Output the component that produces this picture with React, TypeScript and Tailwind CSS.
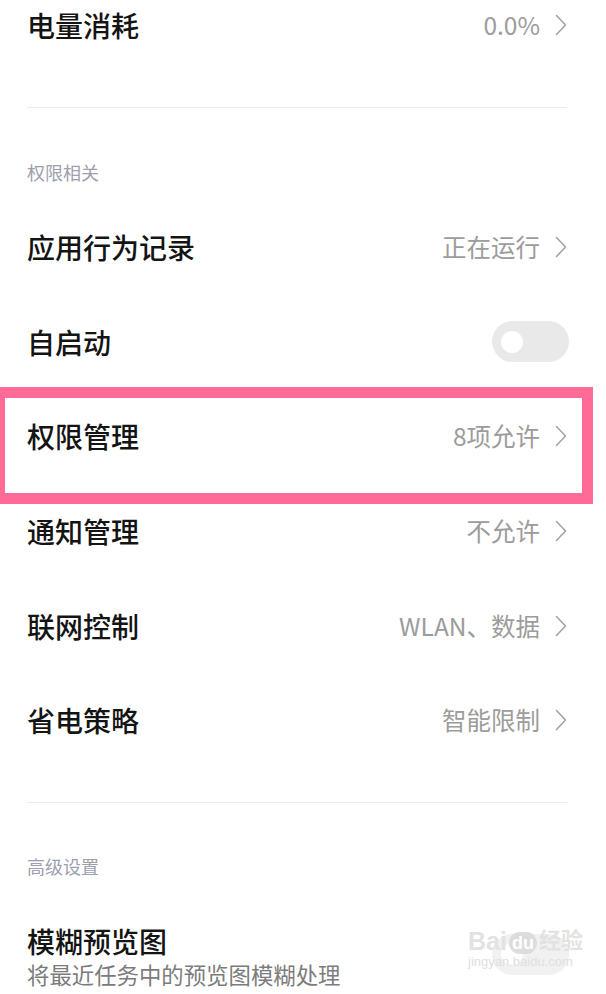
import React from "react";

const Chevron = () => (
  <svg width="12" height="22" viewBox="0 0 12 22" className="shrink-0">
    <polyline points="1.5,1.5 10.5,11 1.5,20.5" fill="none" stroke="#a3a3a3" strokeWidth="1.6" strokeLinecap="round" strokeLinejoin="round" />
  </svg>
);

const Row = ({ title, value }: { title: string; value?: string }) => (
  <div className="flex h-[94.6px] items-center justify-between">
    <span className="text-[28px] leading-[34px] font-medium text-[#141414]">{title}</span>
    {value !== undefined && (
      <div className="flex items-center gap-[15px]">
        <span className="text-[24.5px] leading-[30px] text-[#9c9c9c]">{value}</span>
        <Chevron />
      </div>
    )}
  </div>
);

const Toggle = () => (
  <div className="flex h-[41px] w-[77px] items-center rounded-full bg-[#e9e9e9] pl-[9px]">
    <div className="h-[22px] w-[22px] rounded-full bg-white" />
  </div>
);

export default function App() {
  return (
    <div
      className="relative h-[994px] w-[606px] overflow-hidden bg-white"
      style={{ fontFamily: '"Noto Sans CJK SC", "Noto Sans", sans-serif' }}
    >
      <div className="pl-[27px] pr-[39px]">
        <div className="flex h-[50px] items-center justify-between">
          <span className="text-[28px] leading-[34px] font-medium text-[#141414]">电量消耗</span>
          <div className="flex items-center gap-[15px]">
            <span className="text-[24.5px] leading-[30px] text-[#9c9c9c]">0.0%</span>
            <Chevron />
          </div>
        </div>
        <div className="mt-[57px] h-px bg-[#ebebeb]" />
        <div className="pt-[52px] pb-[16px] text-[18px] leading-[24px] text-[#9d9eae]">权限相关</div>
        <Row title="应用行为记录" value="正在运行" />
        <div className="flex h-[94.6px] items-center justify-between">
          <span className="text-[28px] leading-[34px] font-medium text-[#141414]">自启动</span>
          <div className="mr-[-2px]">
            <Toggle />
          </div>
        </div>
        <Row title="权限管理" value="8项允许" />
        <Row title="通知管理" value="不允许" />
        <Row title="联网控制" value="WLAN、数据" />
        <Row title="省电策略" value="智能限制" />
        <div className="mt-[34.4px] h-px bg-[#ebebeb]" />
        <div className="pt-[51px] text-[18px] leading-[24px] text-[#9d9eae]">高级设置</div>
        <div className="mt-[46px] flex items-center justify-between">
          <div className="flex flex-col gap-[1px]">
            <span className="text-[28px] leading-[34px] font-medium text-[#141414]">模糊预览图</span>
            <span className="text-[22.4px] leading-[30px] text-[#7c7c7c]">将最近任务中的预览图模糊处理</span>
          </div>
          <div className="mr-[-2px] mb-[4px] opacity-60">
            <Toggle />
          </div>
        </div>
      </div>

      {/* highlight annotation */}
      <div className="pointer-events-none absolute left-[-6px] top-[387px] h-[117px] w-[599px] border-[11px] border-[#ff6b96]" />

      {/* watermark */}
      <div className="pointer-events-none absolute left-[468px] top-[928px] flex flex-col items-start">
        <div className="flex items-end gap-[2px] text-[25px] leading-[26px] font-bold text-[#e2e2e2]" style={{ fontFamily: '"Liberation Sans", "Noto Sans CJK SC", sans-serif' }}>
          <span>Bai</span>
          <span className="rounded-full bg-[#dcdcdc] px-[3px] text-[18px] leading-[22px] text-white">du</span>
          <span className="text-[22px]">经验</span>
        </div>
        <div className="text-[13px] leading-[16px] text-[#e0e0e0]" style={{ fontFamily: '"Liberation Sans", sans-serif' }}>jingyan.baidu.com</div>
      </div>
    </div>
  );
}
